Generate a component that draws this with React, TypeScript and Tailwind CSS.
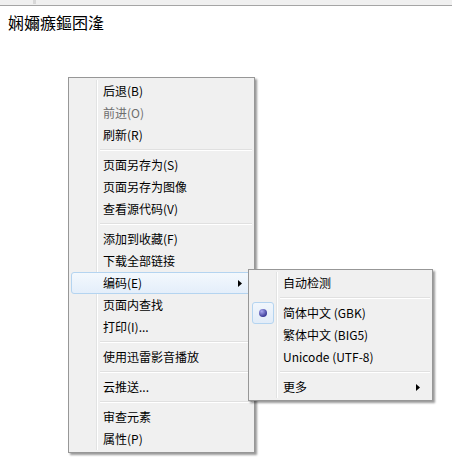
import React from "react";

type Item =
  | { kind: "sep" }
  | { kind: "item"; label: string; disabled?: boolean; hover?: boolean; arrow?: boolean; radio?: boolean };

const mainItems: Item[] = [
  { kind: "item", label: "后退(B)" },
  { kind: "item", label: "前进(O)", disabled: true },
  { kind: "item", label: "刷新(R)" },
  { kind: "sep" },
  { kind: "item", label: "页面另存为(S)" },
  { kind: "item", label: "页面另存为图像" },
  { kind: "item", label: "查看源代码(V)" },
  { kind: "sep" },
  { kind: "item", label: "添加到收藏(F)" },
  { kind: "item", label: "下载全部链接" },
  { kind: "item", label: "编码(E)", hover: true, arrow: true },
  { kind: "item", label: "页面内查找" },
  { kind: "item", label: "打印(I)..." },
  { kind: "sep" },
  { kind: "item", label: "使用迅雷影音播放" },
  { kind: "sep" },
  { kind: "item", label: "云推送..." },
  { kind: "sep" },
  { kind: "item", label: "审查元素" },
  { kind: "item", label: "属性(P)" },
];

const subItems: Item[] = [
  { kind: "item", label: "自动检测" },
  { kind: "sep" },
  { kind: "item", label: "简体中文 (GBK)", radio: true },
  { kind: "item", label: "繁体中文 (BIG5)" },
  { kind: "item", label: "Unicode (UTF-8)" },
  { kind: "sep" },
  { kind: "item", label: "更多", arrow: true },
];

function Arrow() {
  return (
    <svg width="4" height="7" viewBox="0 0 4 7" className="absolute right-[10px] top-[8px]">
      <path d="M0 0 L4 3.5 L0 7 Z" fill="#000" />
    </svg>
  );
}

function MenuList({ items }: { items: Item[] }) {
  return (
    <div className="relative">
      {/* gutter line */}
      <div className="absolute left-[25px] top-0 bottom-0 w-[2px] border-l border-[#e2e3e3] bg-white" />
      {items.map((it, i) =>
        it.kind === "sep" ? (
          <div key={i} className="relative h-[8px] flex items-center pl-[29px]">
            <div className="w-full h-[2px] border-t border-[#e0e0e0] bg-white" />
          </div>
        ) : (
          <div
            key={i}
            className={
              "relative h-[22px] flex items-center pl-[32px] text-[12px] " +
              (it.disabled ? "text-[#6d6d6d]" : "text-black")
            }
          >
            {it.hover && (
              <div className="absolute inset-0 rounded-[3px] border border-[#b4d4f0] bg-gradient-to-b from-[#f3f8fd] to-[#e4eefa]" />
            )}
            {it.radio && (
              <div className="absolute left-[1px] top-0 w-[22px] h-[22px] rounded-[3px] border border-[#b4d4f0] bg-gradient-to-b from-[#f1f6fc] to-[#e2ecf8] flex items-center justify-center">
                <div className="w-[8px] h-[8px] rounded-full bg-[radial-gradient(circle_at_35%_30%,#a9a9f0,#3d3d9a_70%)]" />
              </div>
            )}
            <span className="relative">{it.label}</span>
            {it.arrow && <Arrow />}
          </div>
        )
      )}
    </div>
  );
}

export default function App() {
  return (
    <div
      className="relative w-[452px] h-[459px] bg-white overflow-hidden"
      style={{ fontFamily: '"Noto Sans CJK SC", "Noto Sans", sans-serif' }}
    >
      <div className="h-[6px] bg-[#f0f0f0] border-b border-[#a5a5a5] relative">
        <div className="absolute left-[33px] top-0 w-[3px] h-[4px] bg-[#d8d8d8]" />
      </div>
      <div className="pl-[8px] pt-[5px] text-[16px] leading-[22px] text-black">娴嬭瘯鏂囨湰</div>

      {/* main context menu */}
      <div className="absolute left-[68px] top-[77px] w-[187px] border border-[#979797] bg-[#f0f0f0] p-[2px] shadow-[2px_2px_2px_rgba(0,0,0,0.4)]">
        <MenuList items={mainItems} />
      </div>

      {/* encoding submenu */}
      <div className="absolute left-[248px] top-[269px] w-[185px] border border-[#979797] bg-[#f0f0f0] p-[2px] shadow-[2px_2px_2px_rgba(0,0,0,0.4)]">
        <MenuList items={subItems} />
      </div>
    </div>
  );
}
